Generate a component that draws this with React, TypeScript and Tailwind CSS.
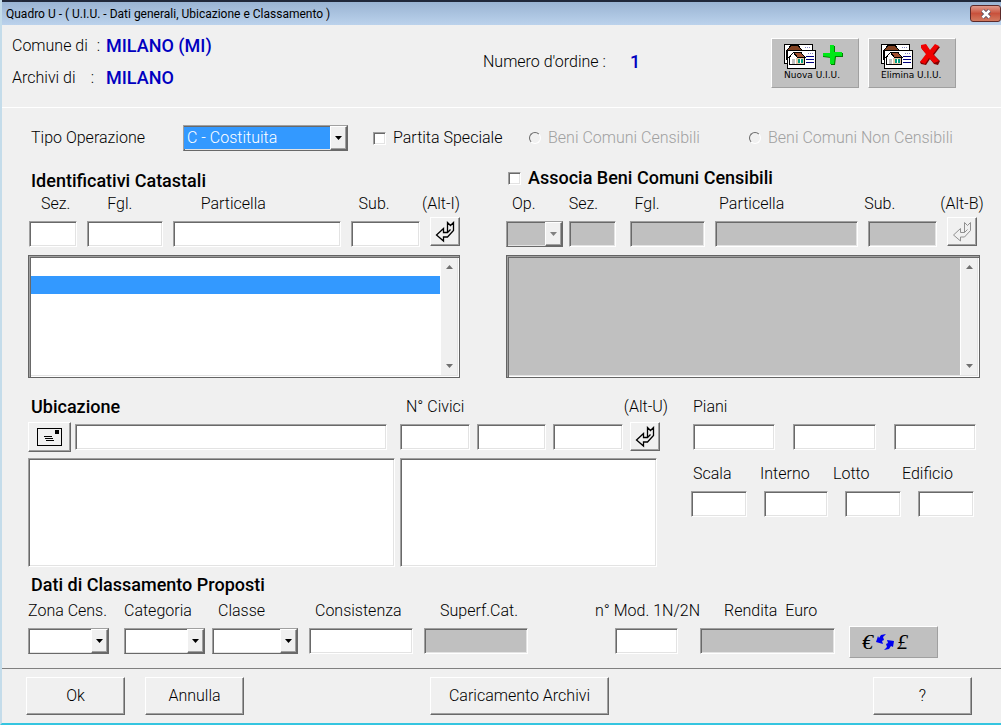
import React from 'react';
import clsx from 'clsx';

const sunken =
  'block w-full h-[26px] px-1 border border-t-[#a0a0a0] border-l-[#a0a0a0] border-r-white border-b-white shadow-[inset_1px_1px_0_#696969,inset_-1px_-1px_0_#e3e3e3] outline-none';
const raised =
  'bg-[#f0f0f0] border border-t-white border-l-white border-r-[#696969] border-b-[#696969] shadow-[inset_-1px_-1px_0_#a0a0a0]';
const flatRaised = 'bg-[#c0c0c0] border border-t-white border-l-white border-r-[#a0a0a0] border-b-[#a0a0a0]';
const listFrame =
  'border border-[#646464] p-[2px] shadow-[inset_1px_1px_0_#a0a0a0,inset_2px_2px_0_#696969,inset_-1px_-1px_0_#ffffff,inset_-2px_-2px_0_#e3e3e3]';
const checkbox = clsx(sunken, 'appearance-none !w-[13px] !h-[13px] !p-0 bg-white');
const radio =
  'appearance-none size-3 rounded-full border border-t-[#696969] border-l-[#696969] border-r-white border-b-white';
const heading = 'font-medium text-[18px]';

interface FieldProps {
  id: string;
  label?: string;
  ariaLabel?: string;
  labelClass?: string;
  className?: string;
  tall?: boolean;
  disabled?: boolean;
  select?: boolean;
}

const Combo: React.FC<{ id: string; disabled?: boolean; options?: string[]; active?: boolean }> = ({
  id,
  disabled,
  options = [''],
  active,
}) => (
  <div className={clsx(sunken, 'relative !px-0 p-px !border-r-[#696969] !border-b-[#696969]', disabled ? 'bg-[#c0c0c0]' : 'bg-white')}>
    <select
      id={id}
      disabled={disabled}
      className={clsx(
        'appearance-none block w-full h-full pl-[3px] pr-5 outline-none',
        active ? 'bg-[#3399ff] text-white' : 'bg-transparent'
      )}
    >
      {options.map((o) => (
        <option key={o}>{o}</option>
      ))}
    </select>
    <span className={clsx(raised, 'absolute right-0 inset-y-0 w-[17px] flex items-center justify-center pointer-events-none')}>
      <svg width="7" height="4" viewBox="0 0 7 4">
        <path d="M0 0H7L3.5 4Z" fill={disabled ? '#808080' : '#000'} />
      </svg>
    </span>
  </div>
);

const Field: React.FC<FieldProps> = ({ id, label, ariaLabel, labelClass, className, tall, disabled, select }) => (
  <div className={clsx('min-w-0', className)}>
    {label && (
      <label htmlFor={id} className={clsx('block whitespace-pre', tall ? 'h-7' : 'h-[26px]', labelClass)}>
        {label}
      </label>
    )}
    {select ? (
      <Combo id={id} disabled={disabled} />
    ) : (
      <input id={id} aria-label={ariaLabel} disabled={disabled} className={clsx(sunken, disabled ? 'bg-[#c0c0c0]' : 'bg-white')} />
    )}
  </div>
);

const ReturnButton: React.FC<{ label: string; disabled?: boolean }> = ({ label, disabled }) => (
  <button type="button" aria-label={label} disabled={disabled} className={clsx(raised, 'w-[30px] h-[29px] shrink-0 flex items-center justify-center')}>
    <svg width="20" height="22" viewBox="0 0 20 22" fill="none" stroke={disabled ? '#909090' : '#000'} strokeWidth={disabled ? 1 : 1.3}>
      <path d="M12.500 11.500V1.500L15.500 4.500L18.500 1.500V9.500L12.500 16H8.500V20L1.500 14L8.500 7.500V11.500H12.500L15.500 8.500" />
    </svg>
  </button>
);

const ListBox: React.FC<{ label: string; disabled?: boolean; selected?: boolean }> = ({ label, disabled, selected }) => (
  <div className={clsx(listFrame, 'mt-2 h-[123px] flex', disabled ? 'bg-[#c0c0c0]' : 'bg-white')}>
    <ul role="listbox" aria-label={label} className="flex-1">
      <li role="option" aria-selected={false} className="h-[18px]" />
      {selected && <li role="option" aria-selected className="h-[18px] bg-[#3399ff]" />}
    </ul>
    <div className="w-[17px] flex flex-col items-center justify-between py-[7px] bg-[#f0f0f0] border-l border-white">
      <svg width="7" height="4" viewBox="0 0 7 4">
        <path d="M0 4H7L3.5 0Z" fill="#707070" />
      </svg>
      <svg width="7" height="4" viewBox="0 0 7 4">
        <path d="M0 0H7L3.5 4Z" fill="#707070" />
      </svg>
    </div>
  </div>
);

const Cards: React.FC = () => (
  <svg width="32" height="25" viewBox="0 0 32 25" shapeRendering="crispEdges">
    <path d="M.5 .5H28.5V19H.5Z" fill="#fff" stroke="#000" />
    <path d="M2 7V15H4V7Z" fill="#fff" stroke="#000" />
    <path d="M2.500 6.500L7 1.500H14L18.500 6.500Z" fill="#804020" stroke="#000" />
    <path d="M21 3.500H27" stroke="#8080c0" strokeDasharray="1 1" />
    <path d="M3.500 6.500H31.500V24.500H3.500Z" fill="#fff" stroke="#000" />
    <path d="M5.500 14V20.500H20.500V14" fill="#fff" stroke="#000" />
    <path d="M12 14H20V20H12Z" fill="#e8c8a8" />
    <path d="M9.500 8.500H17L21 13.500H13.500Z" fill="#a05030" stroke="#000" />
    <path d="M4.500 14L9.500 8.500L13.500 14" fill="#fff" stroke="#000" />
    <path d="M8 15H11V20H8Z" fill="#c0c0c0" />
    <path d="M14 15H19V19H14Z" fill="#00a080" />
    <path d="M16 15H17V19H16Z" fill="#fff" />
    <path d="M22 12.500H30M22 15.500H30M22 18.500H30" stroke="#000080" />
    <path d="M24 9.500H30" stroke="#8080c0" strokeDasharray="1 1" />
  </svg>
);

const ActionButton: React.FC<{ text: string; children: React.ReactNode }> = ({ text, children }) => (
  <button type="button" className={clsx(flatRaised, 'w-[88px] h-[50px] pl-3 pt-[5px] flex flex-col items-start')}>
    <span className="flex gap-[6px]">
      <Cards />
      {children}
    </span>
    <span className="font-['DejaVu_Sans'] font-normal text-[9px] leading-3 whitespace-nowrap">{text}</span>
  </button>
);

const App: React.FC = () => {
  return (
    <div className="min-h-screen flex flex-col bg-[#f0f0f0] border-l-2 border-l-[#c4dcea] border-b-2 border-b-[#35c5e0] font-[Roboto,sans-serif] font-light text-[16px] leading-[22px] text-black">
      <header className="h-[25px] flex items-center justify-between pl-1 border-t-2 border-[#20283a] bg-linear-to-b from-[#9ab4d3] to-[#bbd2ec] font-normal">
        <h1 className="text-[12px]">Quadro U - ( U.I.U. - Dati generali, Ubicazione e Classamento )</h1>
        <button type="button" aria-label="Chiudi" className="w-[31px] h-[17px] rounded-[3px] border border-[#5c2a2a] bg-linear-to-b from-[#e09a8c] via-[#c8513c] to-[#d27a60] flex items-center justify-center">
          <svg width="12" height="10" viewBox="0 0 12 10">
            <path d="M2.500 1.500L9.500 8.500M9.500 1.500L2.500 8.500" stroke="#4a4a5c" strokeWidth="4" />
            <path d="M2.500 1.500L9.500 8.500M9.500 1.500L2.500 8.500" stroke="#fff" strokeWidth="2.500" />
          </svg>
        </button>
      </header>

      <section className="h-[83px] flex items-start pl-[10px] pr-[45px] pt-[10px] border-b border-white">
        <dl className="w-[471px] grid grid-cols-[94px_1fr] gap-y-[10px]">
          <dt className="flex justify-between pr-[6px]"><span>Comune di</span><span>:</span></dt>
          <dd className={clsx(heading, 'text-[#0000c0]')}>MILANO (MI)</dd>
          <dt className="flex justify-between pr-3"><span>Archivi di</span><span>:</span></dt>
          <dd className={clsx(heading, 'text-[#0000c0]')}>MILANO</dd>
        </dl>
        <p className="pt-4 flex gap-6">
          <span>Numero d'ordine :</span>
          <span className={clsx(heading, 'text-[#0000c0]')}>1</span>
        </p>
        <div className="ml-auto flex gap-[9px] pt-[3px]">
          <ActionButton text="Nuova U.I.U.">
            <svg width="22" height="22" viewBox="0 0 22 22">
              <path d="M9 2H13V9H21V13H14L13 21H9V14L1 13V10H9Z" fill="#008000" />
              <path d="M8 1H12V8H20V12H13L12 20H8V13L1 12V9H8Z" fill="#00e818" />
            </svg>
          </ActionButton>
          <ActionButton text="Elimina U.I.U.">
            <svg width="22" height="22" viewBox="0 0 22 22">
              <path d="M3 2L7 1L11 7L16 1L21 3L15 11L21 17L19 21L15 20L11 15L7 21L2 20L1 18L8 11L3 5Z" fill="#800000" />
              <path d="M2 1L7 0L11 6L16 0L20 2L14 10L20 17L15 19L10 14L6 20L1 18L7 10L2 4Z" fill="#f00000" />
            </svg>
          </ActionButton>
        </div>
      </section>

      <main className="pl-[26px] pr-[21px]">
        <div className="flex items-center pt-[17px] pl-[3px]">
          <label htmlFor="tipo" className="w-[152px]">Tipo Operazione</label>
          <div className="w-[165px]">
            <Combo id="tipo" options={['C - Costituita']} active />
          </div>
          <label className="ml-[25px] w-[156px] flex items-center gap-[7px]">
            <input type="checkbox" className={checkbox} />
            Partita Speciale
          </label>
          <label className="w-[220px] flex items-center gap-[7px] text-[#a0a0a0]">
            <input type="radio" name="beni" disabled className={radio} />
            Beni Comuni Censibili
          </label>
          <label className="flex items-center gap-[7px] text-[#a0a0a0] whitespace-nowrap">
            <input type="radio" name="beni" disabled className={radio} />
            Beni Comuni Non Censibili
          </label>
        </div>

        <div className="grid grid-cols-[432fr_474fr] gap-x-[46px] pt-4">
          <section>
            <h2 className={clsx(heading, 'pl-[3px] pt-[3px] h-[26px]')}>Identificativi Catastali</h2>
            <div className="pl-px grid grid-cols-[48fr_75fr_167fr_69fr_30px] gap-[10px]">
              <Field id="i-sez" label="Sez." labelClass="pl-3" tall />
              <Field id="i-fgl" label="Fgl." labelClass="pl-5" tall />
              <Field id="i-part" label="Particella" labelClass="pl-7" tall />
              <Field id="i-sub" label="Sub." labelClass="pl-2" tall />
              <div>
                <div className="h-6 flex justify-end whitespace-nowrap">(Alt-I)</div>
                <ReturnButton label="Inserisci identificativo" />
              </div>
            </div>
            <ListBox label="Identificativi catastali" selected />
          </section>

          <section>
            <h2 className={clsx(heading, 'h-[26px]')}>
              <label className="flex items-center gap-[7px] pl-[2px]">
                <input type="checkbox" className={checkbox} />
                Associa Beni Comuni Censibili
              </label>
            </h2>
            <div className="pr-[3px] grid grid-cols-[57fr_48fr_75fr_144fr_69fr_30px] gap-[10px]">
              <Field id="b-op" label="Op." labelClass="pl-[6px]" tall disabled select />
              <Field id="b-sez" label="Sez." className="-ml-1 mr-1" tall disabled />
              <Field id="b-fgl" label="Fgl." labelClass="pl-1" tall disabled />
              <Field id="b-part" label="Particella" labelClass="pl-1" tall disabled />
              <Field id="b-sub" label="Sub." labelClass="-ml-1" tall disabled />
              <div>
                <div className="h-6 flex justify-center whitespace-nowrap">(Alt-B)</div>
                <ReturnButton label="Inserisci bene comune" disabled />
              </div>
            </div>
            <ListBox label="Beni comuni censibili" disabled />
          </section>
        </div>

        <div className="grid grid-cols-[372fr_291fr_285fr] pt-[18px] pr-1">
          <section className="pr-[5px]">
            <h2 className={clsx(heading, 'pl-[3px] h-[26px]')}>Ubicazione</h2>
            <div className="flex items-center gap-1 pr-2">
              <button type="button" aria-label="Indirizzo" className={clsx(raised, 'w-[43px] h-[30px] shrink-0 flex items-center justify-center')}>
                <svg width="25" height="18" viewBox="0 0 25 18" shapeRendering="crispEdges">
                  <path d="M.5 .5H24.500V17.500H.5Z" fill="none" stroke="#000" />
                  <path d="M18 2H22V6H18Z" />
                  <path d="M7 8.500H15M8 10.500H16M9 12.500H17" stroke="#000" />
                </svg>
              </button>
              <Field id="via" ariaLabel="Ubicazione" className="flex-1" />
            </div>
          </section>
          <section className="pr-[31px]">
            <div className="h-[26px] flex justify-between pl-[6px] -mr-2">
              <h3>N° Civici</h3>
              <span>(Alt-U)</span>
            </div>
            <div className="grid grid-cols-[1fr_1fr_1fr_30px] gap-[7px] items-center">
              <Field id="civ1" ariaLabel="Civico 1" />
              <Field id="civ2" ariaLabel="Civico 2" />
              <Field id="civ3" ariaLabel="Civico 3" />
              <ReturnButton label="Inserisci ubicazione" />
            </div>
          </section>
          <section className="row-span-2">
            <h3 className="h-7 pl-[2px]">Piani</h3>
            <div className="grid grid-cols-3 gap-[18px] pl-[2px]">
              <Field id="piano1" ariaLabel="Piano 1" />
              <Field id="piano2" ariaLabel="Piano 2" />
              <Field id="piano3" ariaLabel="Piano 3" />
            </div>
            <div className="grid grid-cols-[56fr_64fr_56fr_56fr] gap-[17px] pt-[13px] pr-[2px]">
              <Field id="scala" label="Scala" labelClass="pl-[2px]" tall />
              <Field id="interno" label="Interno" labelClass="-ml-1" tall />
              <Field id="lotto" label="Lotto" labelClass="-ml-3" tall />
              <Field id="edificio" label="Edificio" labelClass="-ml-4" tall />
            </div>
          </section>
          <div className="pr-[5px]">
            <ul role="listbox" aria-label="Vie" className={clsx(sunken, '!h-[109px] mt-[6px] bg-white')} />
          </div>
          <div className="pr-[34px]">
            <ul role="listbox" aria-label="Civici" className={clsx(sunken, '!h-[109px] mt-[6px] bg-white')} />
          </div>
        </div>

        <section className="pt-[7px]">
          <h2 className={clsx(heading, 'pl-[3px] h-[26px]')}>Dati di Classamento Proposti</h2>
          <div className="grid grid-cols-[500fr_323fr] gap-[87px] pr-[42px]">
            <div className="grid grid-cols-[81fr_81fr_86fr_104fr_104fr] gap-[11px]">
              <Field id="zona" label="Zona Cens." tall select />
              <Field id="categoria" label="Categoria" className="ml-1 -mr-1" tall select />
              <Field id="classe" label="Classe" labelClass="pl-[6px]" tall select />
              <Field id="consistenza" label="Consistenza" labelClass="pl-[6px]" tall />
              <Field id="superficie" label="Superf.Cat." labelClass="pl-4" tall disabled />
            </div>
            <div className="grid grid-cols-[63fr_135fr_89fr] gap-[18px]">
              <Field id="mod" label="n° Mod. 1N/2N" labelClass="-ml-5" tall />
              <Field id="rendita" label="Rendita  Euro" className="ml-1 -mr-1" labelClass="pl-6" tall disabled />
              <button
                type="button"
                aria-label="Converti euro lire"
                className={clsx(flatRaised, 'self-end h-8 -mb-1 pl-3 flex items-center gap-[2px] font-[Liberation_Serif,serif] italic font-normal text-[22px]')}
              >
                €
                <svg width="20" height="18" viewBox="0 0 20 18" fill="#0000f0">
                  <path d="M11 1L6 2L4 5L3 3L1 9L8 11L7 8L9 7L8 4Z" />
                  <path d="M9 17L14 16L16 13L18 14L19 8L12 7L13 10L11 11L12 14Z" />
                </svg>
                £
              </button>
            </div>
          </div>
        </section>
      </main>

      <footer className="mt-[14px] pt-2 pl-6 pr-[29px] border-t border-[#808080] flex">
        <button type="button" className={clsx(raised, 'w-[99px] h-[38px]')}>Ok</button>
        <button type="button" className={clsx(raised, 'ml-5 w-[99px] h-[38px]')}>Annulla</button>
        <span className="grow-[186]" />
        <button type="button" className={clsx(raised, 'w-[179px] h-[38px]')}>Caricamento Archivi</button>
        <span className="grow-[264]" />
        <button type="button" className={clsx(raised, 'w-[99px] h-[38px]')}>?</button>
      </footer>
    </div>
  );
};

export default App;
